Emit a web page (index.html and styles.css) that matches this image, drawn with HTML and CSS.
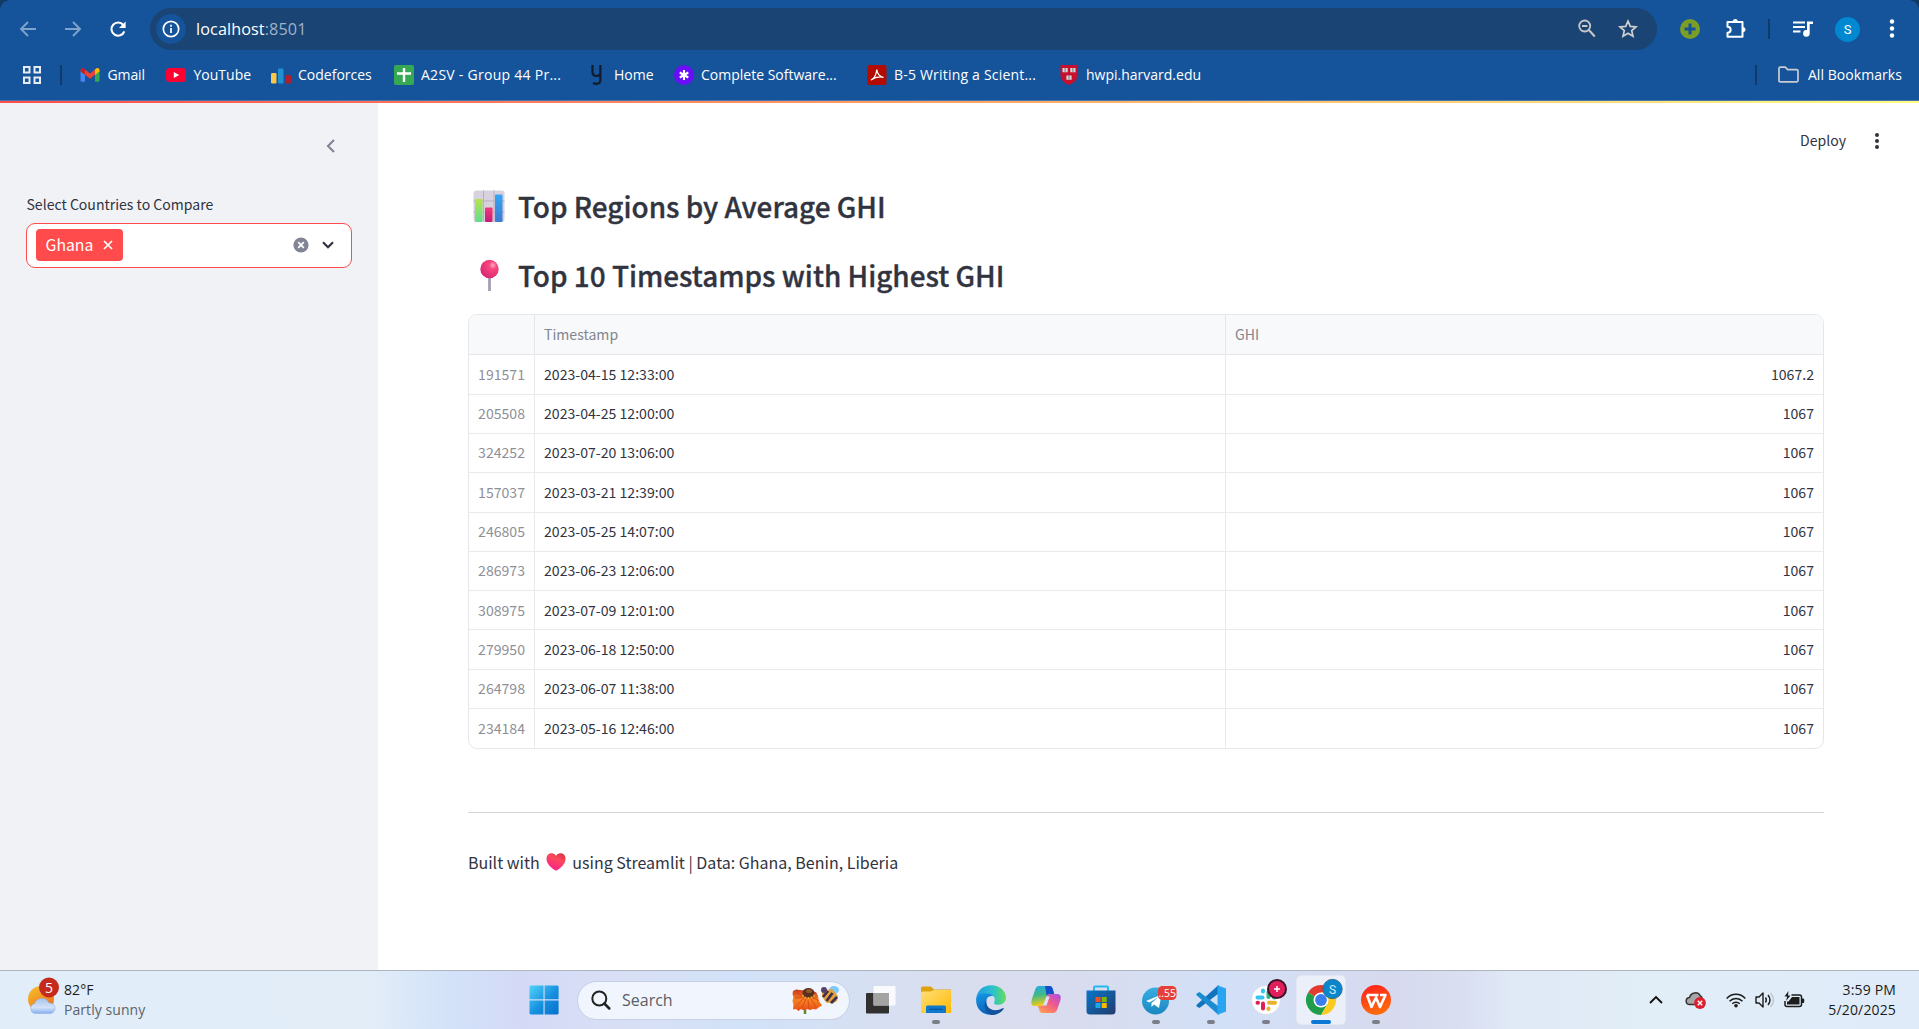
FILE: index.html
```html
<!DOCTYPE html>
<html lang="en">
<head>
<meta charset="utf-8">
<title>GHI Dashboard</title>
<link rel="stylesheet" href="styles.css">
</head>
<body>
<header class="browser">
  <div class="toolbar">
    <div class="nav-buttons">
      <svg class="faded" width="18" height="18" viewBox="0 0 18 18"><path d="M17 9H2.500M9 2L2 9l7 7" fill="none" stroke="#7fa3cb" stroke-width="1.900"/></svg>
      <svg class="faded" width="18" height="18" viewBox="0 0 18 18"><path d="M1 9h14.500M9 2l7 7-7 7" fill="none" stroke="#7fa3cb" stroke-width="1.900"/></svg>
      <svg width="18" height="18" viewBox="0 0 18 18"><path d="M15.300 11.300A6.600 6.600 0 1 1 14.300 5" fill="none" stroke="#fff" stroke-width="2.100"/><path d="M16.600 1.500v6.600H10z" fill="#fff"/></svg>
    </div>
    <div class="omnibox">
      <span class="site-info"><svg width="18" height="18" viewBox="0 0 18 18"><circle cx="9" cy="9" r="7.700" fill="none" stroke="#fff" stroke-width="1.700"/><path d="M9 8v5M9 4.800v1.900" stroke="#fff" stroke-width="1.700"/></svg></span>
      <span class="url">localhost<span class="port">:8501</span></span>
      <svg class="omni-zoom" width="18" height="20" viewBox="0 0 18 20"><circle cx="6.700" cy="7" r="5.500" fill="none" stroke="#c8c8c8" stroke-width="1.800"/><path d="M10.800 11l6 6.500M4 7h5.400" stroke="#c8c8c8" stroke-width="2"/></svg>
      <svg width="20" height="20" viewBox="0 0 20 20"><path d="M10 2.200l2.300 5.200 5.700.5-4.300 3.700 1.300 5.600-5-3-5 3 1.300-5.600L2 7.900l5.700-.5z" fill="none" stroke="#d0d0d0" stroke-width="1.700"/></svg>
    </div>
    <div class="tool-actions">
      <svg width="20" height="20" viewBox="0 0 20 20"><circle cx="10" cy="10" r="10" fill="#7a9e26"/><path d="M10 4.500v11M4.500 10h11" stroke="#17509a" stroke-width="3"/></svg>
      <svg width="22" height="22" viewBox="0 0 22 22"><path d="M2.500 4h15v14.800h-15v-4c4.200 0 4.200-6 0-6z" fill="none" stroke="#fff" stroke-width="2" stroke-linejoin="round"/><path d="M7.700 4a2.600 3 0 0 1 5.200 0zM17.500 9a3 2.600 0 0 1 0 5.200z" fill="#fff"/></svg>
      <i class="divider"></i>
      <svg class="media" width="20" height="20" viewBox="0 0 20 20"><path d="M0 3.500h12M0 8h12M0 12.500h7.500" stroke="#fff" stroke-width="2"/><path d="M14 2.500h6v2.600h-3.300v9.200a3.300 3.300 0 1 1-2.700-3.100z" fill="#fff"/></svg>
      <span class="avatar">S</span>
      <svg class="menu" width="6" height="22" viewBox="0 0 6 22"><g fill="#fff"><circle cx="3" cy="3.500" r="2.200"/><circle cx="3" cy="10.500" r="2.200"/><circle cx="3" cy="17.500" r="2.200"/></g></svg>
    </div>
  </div>
  <nav class="bookmarks">
    <svg class="apps" width="18" height="18" viewBox="0 0 18 18"><path d="M1 1h5.500v5.500H1zM11.500 1H17v5.500h-5.500zM1 11.500h5.500V17H1zM11.500 11.500H17V17h-5.500z" fill="none" stroke="#e8edf5" stroke-width="2"/></svg>
    <i class="divider"></i>
    <ul>
      <li><svg width="20" height="20" viewBox="0 0 20 20"><path d="M.5 6v9.500q0 1.200 1.200 1.200H5V8.500z" fill="#4285f4"/><path d="M19.500 6v9.500q0 1.200-1.200 1.200H15V8.500z" fill="#34a853"/><path d="M5 4.500l5 4 5-4v5.300l-5 3.900-5-3.900z" fill="#ea4335"/><path d="M.5 5c0-2 2-2.500 3.300-1.600L5 4.500v5.300L.5 6.500z" fill="#c5221f"/><path d="M19.500 5c0-2-2-2.500-3.300-1.600L15 4.500v5.300l4.500-3.300z" fill="#fbbc04"/></svg><span class="w-gmail">Gmail</span></li>
      <li><svg width="20" height="20" viewBox="0 0 20 20"><rect y="3" width="20" height="14" rx="3.500" fill="#f03"/><path d="M7.800 7v6l5.400-3z" fill="#fff"/></svg><span>YouTube</span></li>
      <li><svg width="20" height="20" viewBox="0 0 20 20"><rect y="8" width="5.500" height="10.500" rx="1.200" fill="#f9c84a"/><rect x="7" y="3.500" width="5.500" height="15" rx="1.200" fill="#2190d2"/><rect x="14.500" y="10" width="5.500" height="8.500" rx="1.200" fill="#b21f2c"/></svg><span>Codeforces</span></li>
      <li><svg width="20" height="20" viewBox="0 0 20 20"><rect width="20" height="20" rx="2" fill="#34a853"/><path d="M10 3v14M3 8.500h14" stroke="#fff" stroke-width="2.400"/></svg><span class="w-sheet">A2SV - Group 44 Pr...</span></li>
      <li><svg width="20" height="20" viewBox="0 0 20 20"><path d="M5.500 0v6.500c0 3 1 4.500 3.700 4.500 2.500 0 4.200-1.200 4.200-3.500V0v15c0 2.700-1.500 3.800-4 3.800-1.500 0-2.400-.3-3.400-.8" fill="none" stroke="#111c2c" stroke-width="2.200"/></svg><span>Home</span></li>
      <li><svg width="20" height="20" viewBox="0 0 20 20"><circle cx="10" cy="10" r="10" fill="#6a0dfa"/><path d="M10 5v10M5.700 7.500l8.600 5M14.300 7.500l-8.600 5" stroke="#fff" stroke-width="2.100"/></svg><span>Complete Software...</span></li>
      <li><svg width="20" height="20" viewBox="0 0 20 20"><rect x=".5" width="19" height="20" rx="2" fill="#b30b00"/><path d="M4 15c3-1 5.500-5.500 5.800-10.500C10 8 12.500 12 16.500 12.300 12 11.300 7.500 12.500 4 15z" fill="none" stroke="#fff" stroke-width="1.300"/></svg><span class="w-pdf">B-5 Writing a Scient...</span></li>
      <li><svg width="20" height="20" viewBox="0 0 20 20"><path d="M1.500 0h17v10c0 5-4 8-8.500 10-4.500-2-8.500-5-8.500-10z" fill="#c8102e"/><path d="M3.500 3h5.200v4.200H3.500zM11.300 3h5.200v4.200h-5.200zM7.400 10.500h5.200v4.200H7.400z" fill="#d7d7d7"/><path d="M6.100 3v4M13.900 3v4M10 10.500v4" stroke="#777"/></svg><span>hwpi.harvard.edu</span></li>
    </ul>
    <i class="divider end"></i>
    <svg class="folder" width="21" height="18" viewBox="0 0 21 18"><path d="M1 14.500v-12Q1 1.200 2.200 1.200h5l2.500 2.500h9q1.300 0 1.300 1.300v9.500q0 1.300-1.300 1.300H2.200Q1 15.800 1 14.500z" fill="none" stroke="#c9cdd2" stroke-width="1.700"/></svg>
    <span class="all">All Bookmarks</span>
  </nav>
</header>

<div class="app">
  <aside class="sidebar">
    <svg class="collapse" width="10" height="14" viewBox="0 0 10 14"><path d="M8 1L2 7l6 6" fill="none" stroke="#808495" stroke-width="2.100"/></svg>
    <label class="label">Select Countries to Compare</label>
    <div class="select">
      <span class="tag">Ghana<svg width="10" height="10" viewBox="0 0 10 10"><path d="M1 1l8 8M9 1L1 9" stroke="#fff" stroke-width="1.700"/></svg></span>
      <svg class="clear" width="16" height="16" viewBox="0 0 16 16"><circle cx="8" cy="8" r="7.600" fill="#808495"/><path d="M5.200 5.200l5.600 5.600M10.800 5.200l-5.600 5.600" stroke="#fff" stroke-width="1.800"/></svg>
      <svg width="12" height="8" viewBox="0 0 12 8"><path d="M1 1.300l5 5 5-5" fill="none" stroke="#31333f" stroke-width="2.200"/></svg>
    </div>
  </aside>
  <main class="main">
    <div class="app-actions"><span>Deploy</span><svg width="4" height="16" viewBox="0 0 4 16"><g fill="#31333f"><circle cx="2" cy="2" r="2"/><circle cx="2" cy="8" r="2"/><circle cx="2" cy="14" r="2"/></g></svg></div>
    <h2><svg width="34" height="34" viewBox="0 0 34 34">
      <defs><linearGradient id="gn" x2="0" y2="1"><stop stop-color="#b6e34c"/><stop offset="1" stop-color="#62dd90"/></linearGradient><linearGradient id="pk" x2="0" y2="1"><stop stop-color="#f23a78"/><stop offset="1" stop-color="#c51d7a"/></linearGradient><linearGradient id="bl" x2="0" y2="1"><stop stop-color="#37a5f5"/><stop offset="1" stop-color="#3b7bcf"/></linearGradient></defs>
      <rect x="1.500" y="1.500" width="31" height="31.500" rx="3" fill="#d8d2de"/><path d="M11.500 1.500v31M22 1.500v31M1.500 12h31M1.500 23h31" stroke="#b8b0c0"/>
      <rect x="3" y="10" width="7.500" height="23" rx="1" fill="url(#gn)"/><rect x="13" y="18.500" width="7.500" height="14.500" rx="1" fill="url(#pk)"/><rect x="23" y="5.500" width="7.500" height="27.500" rx="1" fill="url(#bl)"/></svg><span>Top Regions by Average GHI</span></h2>
    <h2><svg width="34" height="34" viewBox="0 0 34 34">
      <defs><radialGradient id="pin" cx=".68" cy=".3" r=".8"><stop stop-color="#ffb0cb"/><stop offset=".25" stop-color="#fa477e"/><stop offset="1" stop-color="#d52572"/></radialGradient></defs>
      <path d="M17.500 17v16" stroke="#a69eb2" stroke-width="2.800"/><circle cx="17.500" cy="11" r="9.200" fill="url(#pin)"/></svg><span>Top 10 Timestamps with Highest GHI</span></h2>
    <div class="frame">
    <table>
      <colgroup><col class="c-index"><col class="c-time"><col></colgroup>
      <thead><tr><th></th><th>Timestamp</th><th>GHI</th></tr></thead>
      <tbody>
        <tr><td>191571</td><td>2023-04-15 12:33:00</td><td>1067.2</td></tr>
        <tr><td>205508</td><td>2023-04-25 12:00:00</td><td>1067</td></tr>
        <tr><td>324252</td><td>2023-07-20 13:06:00</td><td>1067</td></tr>
        <tr><td>157037</td><td>2023-03-21 12:39:00</td><td>1067</td></tr>
        <tr><td>246805</td><td>2023-05-25 14:07:00</td><td>1067</td></tr>
        <tr><td>286973</td><td>2023-06-23 12:06:00</td><td>1067</td></tr>
        <tr><td>308975</td><td>2023-07-09 12:01:00</td><td>1067</td></tr>
        <tr><td>279950</td><td>2023-06-18 12:50:00</td><td>1067</td></tr>
        <tr><td>264798</td><td>2023-06-07 11:38:00</td><td>1067</td></tr>
        <tr><td>234184</td><td>2023-05-16 12:46:00</td><td>1067</td></tr>
      </tbody>
    </table>
    </div>
    <hr>
    <p class="credit">Built with <svg width="20" height="18" viewBox="0 0 20 18"><defs><linearGradient id="ht" x1=".8" x2=".3" y2="1"><stop stop-color="#d9304a"/><stop offset=".35" stop-color="#fa4a5a"/><stop offset="1" stop-color="#fb1f8e"/></linearGradient></defs><path d="M10 17.800C5 15 .5 11 .5 5.800.5 2.500 2.700.3 5.500.3 7.500.3 9.200 1.300 10 3c.8-1.700 2.500-2.700 4.500-2.700 2.800 0 5 2.200 5 5.500C19.500 11 15 15 10 17.800z" fill="url(#ht)"/></svg> using Streamlit | Data: Ghana, Benin, Liberia</p>
  </main>
</div>

<footer class="taskbar">
  <div class="weather">
    <svg width="32" height="40" viewBox="0 0 32 40"><defs><linearGradient id="sun" x2=".6" y2="1"><stop stop-color="#f5c630"/><stop offset="1" stop-color="#f0701a"/></linearGradient><linearGradient id="cl" x2="0" y2="1"><stop stop-color="#a9c4ee"/><stop offset=".6" stop-color="#d3e2f8"/><stop offset="1" stop-color="#86aef0"/></linearGradient></defs>
      <circle cx="13" cy="23" r="13" fill="url(#sun)"/><path d="M7 37.500a5 5 0 0 1-.5-9.800 7.800 7.800 0 0 1 14.500-.7A5.300 5.300 0 0 1 22.500 37.500z" fill="url(#cl)" stroke="#8fb0e8" stroke-width=".6"/><circle cx="21" cy="11.500" r="10" fill="#c42b1c"/><text x="21" y="16.800" class="badge-text">5</text></svg>
    <div><div class="temp">82°F</div><div class="cond">Partly sunny</div></div>
  </div>
  <div class="dock">
    <svg class="start" width="30" height="30" viewBox="0 0 30 30"><defs><linearGradient id="win" x2="1" y2="1"><stop stop-color="#50d3fb"/><stop offset=".55" stop-color="#158fde"/><stop offset="1" stop-color="#0770cc"/></linearGradient></defs><path d="M1.500.5h13v13.800H.5V1.500zM15.600.5h13l1 1v12.800h-14zM.5 15.500h14v14h-13l-1-1zM15.600 15.500h14v13l-1 1h-13z" fill="url(#win)"/></svg>
    <div class="search">
      <svg width="20" height="20" viewBox="0 0 20 20"><circle cx="8.300" cy="8.500" r="7" fill="none" stroke="#222" stroke-width="2"/><path d="M13.300 13.500l5 5" stroke="#222" stroke-width="2.500" stroke-linecap="round"/></svg>
      <span>Search</span>
      <svg class="bloom" width="48" height="30" viewBox="0 0 48 30"><defs><linearGradient id="pet" x2="0" y2="1"><stop stop-color="#c8391c"/><stop offset=".5" stop-color="#f58220"/><stop offset="1" stop-color="#e84b14"/></linearGradient></defs><path d="M13 22v7" stroke="#5a8a35" stroke-width="2.500"/><path d="M1 6l3-1.500L8 5l16 2 2 4 1 5 3 4.500-3.500 2-2.500 2-3-.5-3 1-3-1-3 1.500-3-1.500-2.500 2-2.500-2-3 .5.500-5L.5 16l1-4-1-3z" fill="url(#pet)"/><path d="M4 8l7 3M3 13l8-1M5 20l7-7M10 23l4-9M17 24l-1-9M24 22l-5-8M27 16l-7-4" stroke="#d9431c" stroke-width=".8"/><ellipse cx="16.500" cy="8" rx="6" ry="5" fill="#57301f"/><path d="M10.500 10c2 4 9 4 12 0" fill="none" stroke="#e8a531" stroke-width="1.800" stroke-dasharray="1.600 1.500"/><ellipse cx="17" cy="6" rx="3" ry="2" fill="#925629"/>
        <ellipse cx="42" cy="5" rx="5" ry="4" fill="#7bcafa"/><path d="M30 3l4 2 6-1 6 7-1 5-4 2.500-7-1-4-6z" fill="#e5a23c"/><path d="M31 12l5-6M34.500 16l6-8M39 18l6-6" stroke="#3d2f50" stroke-width="2.700"/><circle cx="32" cy="5" r="3" fill="#56416c"/></svg>
    </div>
    <div class="pins">
      <span class="pin"><svg width="30" height="30" viewBox="0 0 30 30"><rect x="0" y="8" width="23" height="20.500" rx="1" fill="#30302f"/><rect x="7.500" y="1" width="22" height="19.500" rx="1" fill="#fff" fill-opacity=".85"/><path d="M7.500 8H23v12.500H7.500z" fill="#a3a3a3"/></svg></span>
      <span class="pin run"><svg width="30" height="30" viewBox="0 0 30 30"><defs><linearGradient id="fo" x2="1" y2="1"><stop stop-color="#ffe07a"/><stop offset="1" stop-color="#ffb901"/></linearGradient></defs><path d="M0 3q0-1.500 1.500-1.500H9q1 0 1.800.8L13 4.500h15.500q1.500 0 1.500 1V20H0z" fill="#dfa10c"/><path d="M0 8q0-1.500 1.500-1.500h8L13 5h15.500Q30 5 30 6.500V28H0z" fill="url(#fo)"/><path d="M5 28v-6q0-1.500 1.500-1.500h17q1.500 0 1.500 1.500v6z" fill="#0d78cc"/><path d="M8.500 24.300h13" stroke="#074d92"/></svg></span>
      <span class="pin"><svg width="30" height="30" viewBox="0 0 30 30"><defs><linearGradient id="e1" x2="1"><stop stop-color="#2299e2"/><stop offset=".55" stop-color="#2ac1cf"/><stop offset="1" stop-color="#65de58"/></linearGradient><linearGradient id="e2" x2=".3" y2="1"><stop stop-color="#1597e3"/><stop offset="1" stop-color="#0b62bc"/></linearGradient></defs><path d="M.2 14C1 5 7.500.2 15 .2c9 0 15 6 15 12.300 0 4.500-3.500 7.300-7.700 7.300-3 0-4.400-1-4.400-1.800 0-.7.900-1.200.9-3.200 0-3.500-3.300-6-7.800-6C6 8.800 2 11 .2 14z" fill="url(#e1)"/><path d="M.1 15C.1 11 4.500 8 10 8.300c4 .2 6.500 1.500 7.700 3-5-1.300-7.500 2-7.500 5.500 0 7 6 12 12 10.200C15 33 .1 29 .1 15z" fill="url(#e2)"/><path d="M10.500 14.500c-2 7.500 6 14 16.200 8.700.8-.4 1.300.2.900.8-2.800 4.300-7.500 6-12 6-5.100-1.700-9.500-8.500-5.100-15.500z" fill="#12539d"/></svg></span>
      <span class="pin"><svg width="30" height="30" viewBox="0 0 30 30"><defs><linearGradient id="c1" x2=".2" y2="1"><stop stop-color="#22a8ef"/><stop offset=".5" stop-color="#42b985"/><stop offset="1" stop-color="#f0cb18"/></linearGradient><linearGradient id="c2" x1="1" x2=".3" y2="1"><stop stop-color="#a84fea"/><stop offset=".5" stop-color="#ee598d"/><stop offset="1" stop-color="#ff9654"/></linearGradient></defs><path d="M8 1h11q2 0 2.800 3l1.400 5h-4q-3 0-3.700 2.500L13 18q-1 3-3.500 3H3.500Q-.8 21 .6 15L4 5q1.200-4 4-4z" fill="url(#c1)"/><path d="M14 1h5q2 0 2.800 3l1.400 5h-4q-3 0-3.500 2z" fill="#134fcb"/><path d="M22 28H11.500q-2.500 0-3.200-3L7 21h3q3 0 3.900-3l2-6.800q.8-2.200 3.600-2.200h7q4.300 0 3 6L26 25q-1.200 3-4 3z" fill="url(#c2)"/><path d="M15.500 11.500h3.200L15.500 20.500h-3.400z" fill="#dfe0f3"/></svg></span>
      <span class="pin"><svg width="30" height="30" viewBox="0 0 30 30"><defs><linearGradient id="st" x2="1" y2="1"><stop stop-color="#0877c8"/><stop offset="1" stop-color="#233b6c"/></linearGradient></defs><path d="M8 7V2.500Q8 1.500 9 1.500h12q1 0 1 1V7" fill="none" stroke="#22b9f5" stroke-width="2"/><path d="M.5 5.500h29V26q0 3.500-3.500 3.500H4Q.5 29.500.5 26z" fill="url(#st)"/><path d="M9.500 12h5v5h-5z" fill="#f25022"/><path d="M15.700 12h5v5h-5z" fill="#7fba00"/><path d="M9.500 18h5v5h-5z" fill="#18a9ee"/><path d="M15.700 18h5v5h-5z" fill="#ffb900"/></svg></span>
      <span class="pin run"><svg width="40" height="32" viewBox="0 0 40 32"><defs><linearGradient id="tg" x2="0" y2="1"><stop stop-color="#38aee2"/><stop offset="1" stop-color="#1b87c0"/></linearGradient></defs><circle cx="19.500" cy="17" r="13.500" fill="url(#tg)"/><path d="M10 17l15.500-6.500L23 24l-5-3.500-2.500 2.500v-4l7-6-9 5.500z" fill="#fff"/><rect x="22" y="2" width="18.500" height="14" rx="4.500" fill="#e83e38"/><text x="31.200" y="13" class="tg-text">..55</text></svg></span>
      <span class="pin run"><svg width="30" height="30" viewBox="0 0 30 30"><path d="M22.500 0v8.500L3.500 23 .7 21.500q-.8-.8 0-1.700z" fill="#1174bc"/><path d="M22.500 30v-8.500L3.500 7 .7 8.500q-.8.800 0 1.700z" fill="#1b8bd2"/><path d="M21.500.3L30 3.500v23l-8.500 3.200z" fill="#28a5f2"/></svg></span>
      <span class="pin run"><svg width="40" height="40" viewBox="0 0 40 40"><circle cx="20" cy="20" r="14.500" fill="#fff" stroke="#ccd" stroke-width=".5"/><g stroke-width="4" stroke-linecap="round"><path d="M11.500 17.500h5" stroke="#36c5f0"/><path d="M17 10.500v1" stroke="#36c5f0"/><path d="M22.500 12v5" stroke="#2eb67d"/><path d="M28 17.500h.5" stroke="#2eb67d"/><path d="M23 22.800h6" stroke="#ecb22e"/><path d="M22.500 28.500v.5" stroke="#ecb22e"/><path d="M17 23.500v5" stroke="#e01e5a"/><path d="M11.500 22.800h.5" stroke="#e01e5a"/></g><circle cx="31" cy="9" r="9" fill="#e01e5a" stroke="#3c1228" stroke-width="2"/><path d="M31 6v6M28 9h6" stroke="#fff" stroke-width="1.500"/></svg></span>
      <span class="pin active"><svg width="40" height="40" viewBox="0 0 40 40"><path d="M20 20L7 12.500a15 15 0 0 1 26 0H20z" fill="#e33b2e"/><path d="M7 12.500a15 15 0 0 0 13 22.500l6.500-11.300z" fill="#1e9e4a"/><path d="M20 35a15 15 0 0 0 13-22.500H20L26.500 23.700z" fill="#fccb20"/><circle cx="20" cy="20" r="7.500" fill="#fff"/><circle cx="20" cy="20" r="5.900" fill="#3b7ded"/><circle cx="31.500" cy="9" r="9.700" fill="#0a86cc" stroke="#35607c" stroke-width=".8"/><text x="31.500" y="13.500" class="profile-text">S</text></svg></span>
      <span class="pin run"><svg width="30" height="30" viewBox="0 0 30 30"><defs><linearGradient id="wp" x2=".3" y2="1"><stop stop-color="#ff1d1d"/><stop offset="1" stop-color="#ff6a0c"/></linearGradient></defs><circle cx="15" cy="15" r="15" fill="url(#wp)"/><path d="M6 10h11.500M6 10l4.500 12 4.500-9.500 4 9.500L24.500 10H19" fill="none" stroke="#fff" stroke-width="2.600" stroke-linejoin="round"/></svg></span>
    </div>
  </div>
  <div class="tray">
    <svg width="14" height="8" viewBox="0 0 14 8"><path d="M1 7l6-6 6 6" fill="none" stroke="#111" stroke-width="1.800"/></svg>
    <svg class="cloud" width="21" height="18" viewBox="0 0 21 18"><path d="M5 13.500C0 13.500 0 7 4.500 6.500 6 1 13 .5 15 4.500q2 1 2.500 4l-6 5z" fill="#a7a7a7" stroke="#333" stroke-width="1.500"/><circle cx="15" cy="12" r="5.900" fill="#dc2030"/><path d="M12.800 9.800l4.400 4.400M17.200 9.800l-4.400 4.400" stroke="#fff" stroke-width="1.500"/></svg>
    <svg class="wifi" width="20" height="16" viewBox="0 0 20 16"><g fill="none" stroke="#1c1c1c" stroke-width="1.500"><path d="M.7 6.500a12.500 12.500 0 0 1 18.600 0M3.500 9.200a9 9 0 0 1 13 0M6.300 11.700a5.300 5.300 0 0 1 7.400 0"/></g><circle cx="10" cy="13.800" r="1.800" fill="#1c1c1c"/></svg>
    <svg class="volume" width="20" height="18" viewBox="0 0 20 18"><path d="M1 6h3l4-4v14l-4-4H1z" fill="none" stroke="#1c1c1c" stroke-width="1.400" stroke-linejoin="round"/><path d="M10.500 6.500q1.700 2.500 0 5M13 4q4 5 0 10" fill="none" stroke="#1c1c1c" stroke-width="1.400"/><path d="M15.500 2q6 7 0 14" fill="none" stroke="#bcc6d0" stroke-width="1.400"/></svg>
    <svg class="battery" width="21" height="18" viewBox="0 0 21 18"><path d="M7.500 4h8q2 0 2 2v7.500q0 2-2 2H3q-2 0-2-2V10" fill="none" stroke="#1c1c1c" stroke-width="1.500"/><path d="M8 6h7.500v7.500H3V10.500h1.500zM18 7.500h1.500q.8 0 .8 2.200t-.8 2.200H18zM4.500 0L.5 5.500h2.700L2 10l4.500-5.500H4z" fill="#1c1c1c"/></svg>
    <div class="clock"><div>3:59 PM</div><div>5/20/2025</div></div>
  </div>
</footer>
</body>
</html>
```
FILE: styles.css
```css
* { box-sizing: border-box; }
body {
  margin: 0;
  width: 1919px;
  height: 1029px;
  display: flex;
  flex-direction: column;
  overflow: hidden;
  background: #fff;
  color: #31333f;
  font-family: "Noto Sans CJK SC", "Noto Sans", sans-serif;
}
svg { display: block; flex: none; overflow: visible; }

/* Browser chrome */
.browser {
  height: 101px;
  flex: none;
  background:
    radial-gradient(circle at 100% 100%, transparent 9.500px, #123a66 10px) 0 0 / 10px 10px no-repeat,
    radial-gradient(circle at 0 100%, transparent 9.500px, #123a66 10px) 100% 0 / 10px 10px no-repeat,
    #15539a;
  border-bottom: 1px solid #4576af;
  color: #fff;
  font: 14px/20px "Open Sans", sans-serif;
}
.toolbar { display: flex; align-items: center; padding-top: 8px; height: 50px; }
.nav-buttons { display: flex; gap: 27px; padding-left: 19px; width: 150px; }
.omnibox {
  display: flex;
  align-items: center;
  width: 1507px;
  height: 42px;
  border-radius: 21px;
  background: #194473;
  padding: 0 19px 0 6px;
}
.site-info {
  display: grid;
  place-items: center;
  width: 30px;
  height: 30px;
  border-radius: 50%;
  background: #15539a;
}
.url { font-size: 16.2px; margin-left: 10px; flex: 1; letter-spacing: .1px; }
.port { color: #9fb3ca; }
.omni-zoom { margin-right: 22px; }
.tool-actions { display: flex; align-items: center; margin-left: 23px; flex: 1; gap: 25px; }
.tool-actions .divider { margin-left: -4px; }
.media { margin-left: -2px; }
.avatar {
  width: 25px;
  height: 25px;
  border-radius: 50%;
  background: #0288d1;
  text-align: center;
  font: 13px/25px Roboto, sans-serif;
  margin-left: -3px;
}
.menu { margin-left: 4px; }
.divider { width: 2px; height: 20px; background: #103a68; flex: none; }
.bookmarks { display: flex; align-items: center; height: 50px; padding: 0 17px 0 23px; }
.apps { margin-right: 19px; }
.bookmarks ul {
  display: grid;
  grid-template-columns: 86px 104.500px 123px 193px 87px 193px 192px auto;
  justify-content: start;
  list-style: none;
  margin: 0 0 0 18px;
  padding: 0;
  flex: 1;
}
.bookmarks li { display: flex; align-items: center; gap: 7.500px; white-space: nowrap; }
.w-gmail { letter-spacing: -.1px; }
.bookmarks .w-sheet { letter-spacing: .27px; }
.bookmarks .w-pdf { letter-spacing: .2px; }
.folder { margin: 0 9px 0 21px; }
.all { letter-spacing: .06px; }

/* Application */
.app {
  height: 869px;
  flex: none;
  display: flex;
  border-top: 2px solid;
  border-image: linear-gradient(90deg, #ff4b4b, #fffd80) 1;
}
.sidebar { width: 378px; background: #f0f2f6; padding: 36px 26px 0; display: flex; flex-direction: column; }
.collapse { align-self: flex-end; margin-right: 16px; }
.label { margin: 40px 0 8px; padding-left: .5px; font-size: 14.06px; line-height: 22px; }
.select {
  display: flex;
  align-items: center;
  height: 45px;
  border: 1px solid #ff4b4b;
  border-radius: 9px;
  background: #fff;
  padding: 0 17px 1px 9px;
}
.tag {
  display: flex;
  align-items: center;
  gap: 10px;
  height: 32px;
  width: 87px;
  padding: 0 0 1px 9.500px;
  border-radius: 4px;
  background: #ff4b4b;
  color: #fff;
  font-size: 15.8px;
}
.clear { margin: 0 13px 0 auto; }
.main { flex: 1; padding: 30px 95px 0 90px; display: flex; flex-direction: column; }
.app-actions {
  display: flex;
  align-items: center;
  justify-content: flex-end;
  gap: 29px;
  height: 16px;
  margin-right: -55px;
  font-size: 14.06px;
}
.app-actions span { margin-top: -2px; }
h2 {
  display: flex;
  align-items: center;
  gap: 12px;
  height: 34px;
  margin: 40px 0 0;
  padding-left: 4px;
  font-size: 27.9px;
  line-height: 34px;
  font-weight: 500;
  -webkit-text-stroke: .35px #31333f;
}
h2 + h2 { margin-top: 35px; }
.frame { height: 435px; margin-top: 22px; }
table {
  width: 1356px;
  table-layout: fixed;
  border-collapse: separate;
  border-spacing: 0;
  border: 1px solid #e6e7ea;
  border-radius: 9px;
  overflow: hidden;
  font-size: 14.1px;
  line-height: 20px;
}
.c-index { width: 66px; }
.c-time { width: 691px; }
th, td { height: 39.3px; padding: 0 9px 1.500px; border-right: 1px solid #e9eaec; border-bottom: 1px solid #e9eaec; font-weight: 400; text-align: left; }
th { height: 40.400px; background: #f8f9fb; color: #84868f; border-color: #e6e6ea; }
th:last-child, td:last-child { border-right: 0; }
tbody tr:last-child td { border-bottom: 0; }
td:first-child { color: #8e9098; text-align: right; }
td:last-child { text-align: right; }
hr { width: 100%; height: 1px; border: 0; background: #d5d6d8; margin: 63px 0 0; flex: none; }
.credit { margin: 35px 0 0; display: flex; align-items: center; gap: 2.700px; font-size: 16px; line-height: 28px; white-space: pre; }

/* Windows taskbar */
.taskbar {
  flex: none;
  height: 59px;
  display: grid;
  grid-template-columns: 529px 1119px 1fr;
  border-top: 1px solid #adb5c1;
  background: linear-gradient(90deg, #e1edf8 0, #e2edf8 370px, #d2e2f9 450px, #d4daf6 520px, #d8dff5 620px, #d2e2f8 740px, #d9deef 950px, #d9dcee 1080px, #d2e0f7 1220px, #d7daee 1390px, #d9def1 1460px, #e0e9f6 1510px, #e1edf7 1650px, #dfebf9 1919px);
  color: #1b1b1b;
  font: 14px/20px "Open Sans", sans-serif;
}
.weather { display: flex; gap: 4px; padding: 5px 0 0 28px; }
.weather > div { padding-top: 4px; }
.temp, .cond { letter-spacing: .06px; }
.cond { color: #5c6268; }
.badge-text { font-size: 14px; fill: #fff; text-anchor: middle; }
.dock { display: flex; align-items: center; }
.search {
  display: flex;
  align-items: center;
  width: 273px;
  height: 39px;
  margin: 0 0 0 18px;
  padding: 0 9px 0 13px;
  border: 1px solid #c5d0e6;
  border-radius: 20px;
  background: #f1f5fd;
  font-size: 16px;
  color: #5b5e63;
}
.search span { margin-left: 11px; flex: 1; }
.pins { display: flex; margin-left: 3px; }
.pin { position: relative; display: grid; place-items: center; width: 55px; height: 58px; }
.pin svg { grid-area: 1 / 1; }
.run::after { content: ""; position: absolute; left: 24px; bottom: 5px; width: 8px; height: 4px; border-radius: 2px; background: #7b7f88; }
.active::before { content: ""; grid-area: 1 / 1; width: 48px; height: 48px; border-radius: 5px; background: #eaeff9; border: 1px solid #e2e7f3; }
.active::after { content: ""; position: absolute; left: 18px; bottom: 5px; width: 20px; height: 4px; border-radius: 2px; background: #0a78d4; }
.tg-text { font-size: 10.500px; fill: #fff; text-anchor: middle; }
.profile-text { font: 12px Roboto, sans-serif; fill: #cfeaf8; text-anchor: middle; }
.tray { display: flex; align-items: center; padding-left: 1px; }
.cloud { margin-left: 22px; }
.wifi { margin-left: 20px; }
.volume { margin-left: 9px; }
.battery { margin-left: 9px; }
.clock { flex: 1; padding-right: 23px; text-align: right; letter-spacing: .15px; }
```
